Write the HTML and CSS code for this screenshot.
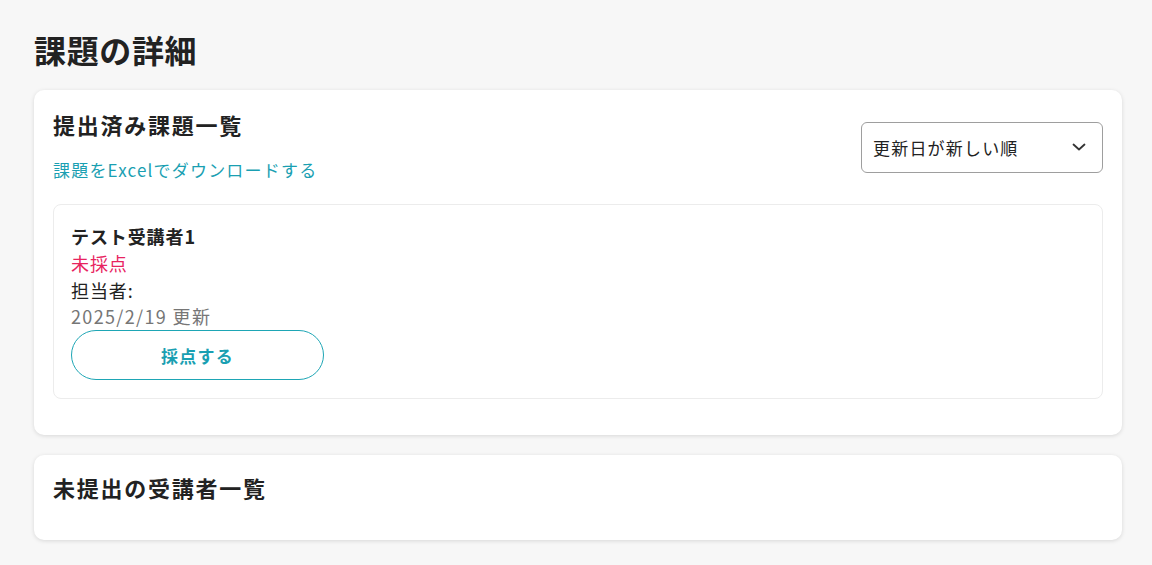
FILE: index.html
```html
<!DOCTYPE html>
<html lang="ja">
<head>
<meta charset="utf-8">
<title>課題の詳細</title>
<link rel="stylesheet" href="styles.css">
</head>
<body>
<main class="page">
  <h1 class="page-title">課題の詳細</h1>

  <section class="card">
    <div class="card-head">
      <div class="head-left">
        <h2 class="card-title">提出済み課題一覧</h2>
        <a class="dl-link" href="#">課題をExcelでダウンロードする</a>
      </div>
      <div class="select">
        <span class="select-text">更新日が新しい順</span>
        <svg class="chev" width="14" height="8" viewBox="0 0 14 8"><path d="M1.5 1.5 L7 6.5 L12.5 1.5" fill="none" stroke="#333" stroke-width="1.8" stroke-linecap="round" stroke-linejoin="round"/></svg>
      </div>
    </div>

    <div class="item">
      <div class="item-name">テスト受講者1</div>
      <div class="item-status">未採点</div>
      <div class="item-line">担当者:</div>
      <div class="item-date">2025/2/19 更新</div>
      <button class="grade-btn">採点する</button>
    </div>
  </section>

  <section class="card card-small">
    <h2 class="card-title">未提出の受講者一覧</h2>
  </section>
</main>
</body>
</html>
```

FILE: styles.css
```css
* { box-sizing: border-box; }
html, body {
  margin: 0;
  padding: 0;
  background: #f7f7f7;
  font-family: "Noto Sans CJK JP", "Noto Sans", sans-serif;
  color: #222;
}
.page {
  padding: 25px 30px 20px 34px;
}
.page-title {
  margin: 0 0 17px;
  font-size: 32px;
  line-height: 48px;
  font-weight: 700;
  letter-spacing: 0.02em;
}
.card {
  background: #fff;
  border-radius: 10px;
  box-shadow: 0 1px 4px rgba(0,0,0,0.13);
  padding: 18px 19px 36px;
  margin-bottom: 20px;
}
.card-small {
  padding: 16px 19px 36px;
}
.card-head {
  display: flex;
  justify-content: space-between;
  align-items: center;
}
.head-left {
  display: flex;
  flex-direction: column;
  align-items: flex-start;
}
.card-title {
  margin: 0;
  font-size: 22px;
  line-height: 33px;
  font-weight: 700;
  letter-spacing: 0.08em;
}
.dl-link {
  margin-top: 17px;
  font-size: 17px;
  line-height: 24px;
  color: #1a9fb2;
  text-decoration: none;
  letter-spacing: 0.07em;
}
.select {
  width: 242px;
  height: 51px;
  margin-top: 4px;
  border: 1px solid #9e9e9e;
  border-radius: 6px;
  display: flex;
  align-items: center;
  justify-content: space-between;
  padding: 0 16px 0 11px;
  background: #fff;
}
.select-text {
  font-size: 17px;
  letter-spacing: 0.07em;
  color: #222;
}
.chev { display: block; }
.item {
  margin-top: 22px;
  border: 1px solid #ececec;
  border-radius: 8px;
  padding: 18px 17px 18px;
  display: flex;
  flex-direction: column;
  align-items: flex-start;
}
.item-name, .item-status, .item-line, .item-date {
  font-size: 18px;
  line-height: 26.75px;
  letter-spacing: 0.05em;
}
.item-name { font-weight: 700; color: #222; }
.item-status { color: #e8245f; }
.item-line { color: #222; }
.item-date { color: #767676; letter-spacing: 0.075em; }
.grade-btn {
  width: 253px;
  height: 50px;
  border: 1px solid #1ea6b5;
  border-radius: 25px;
  background: #fff;
  color: #1a9fb2;
  font-family: inherit;
  font-size: 17px;
  font-weight: 700;
  letter-spacing: 0.07em;
  cursor: pointer;
}
```
